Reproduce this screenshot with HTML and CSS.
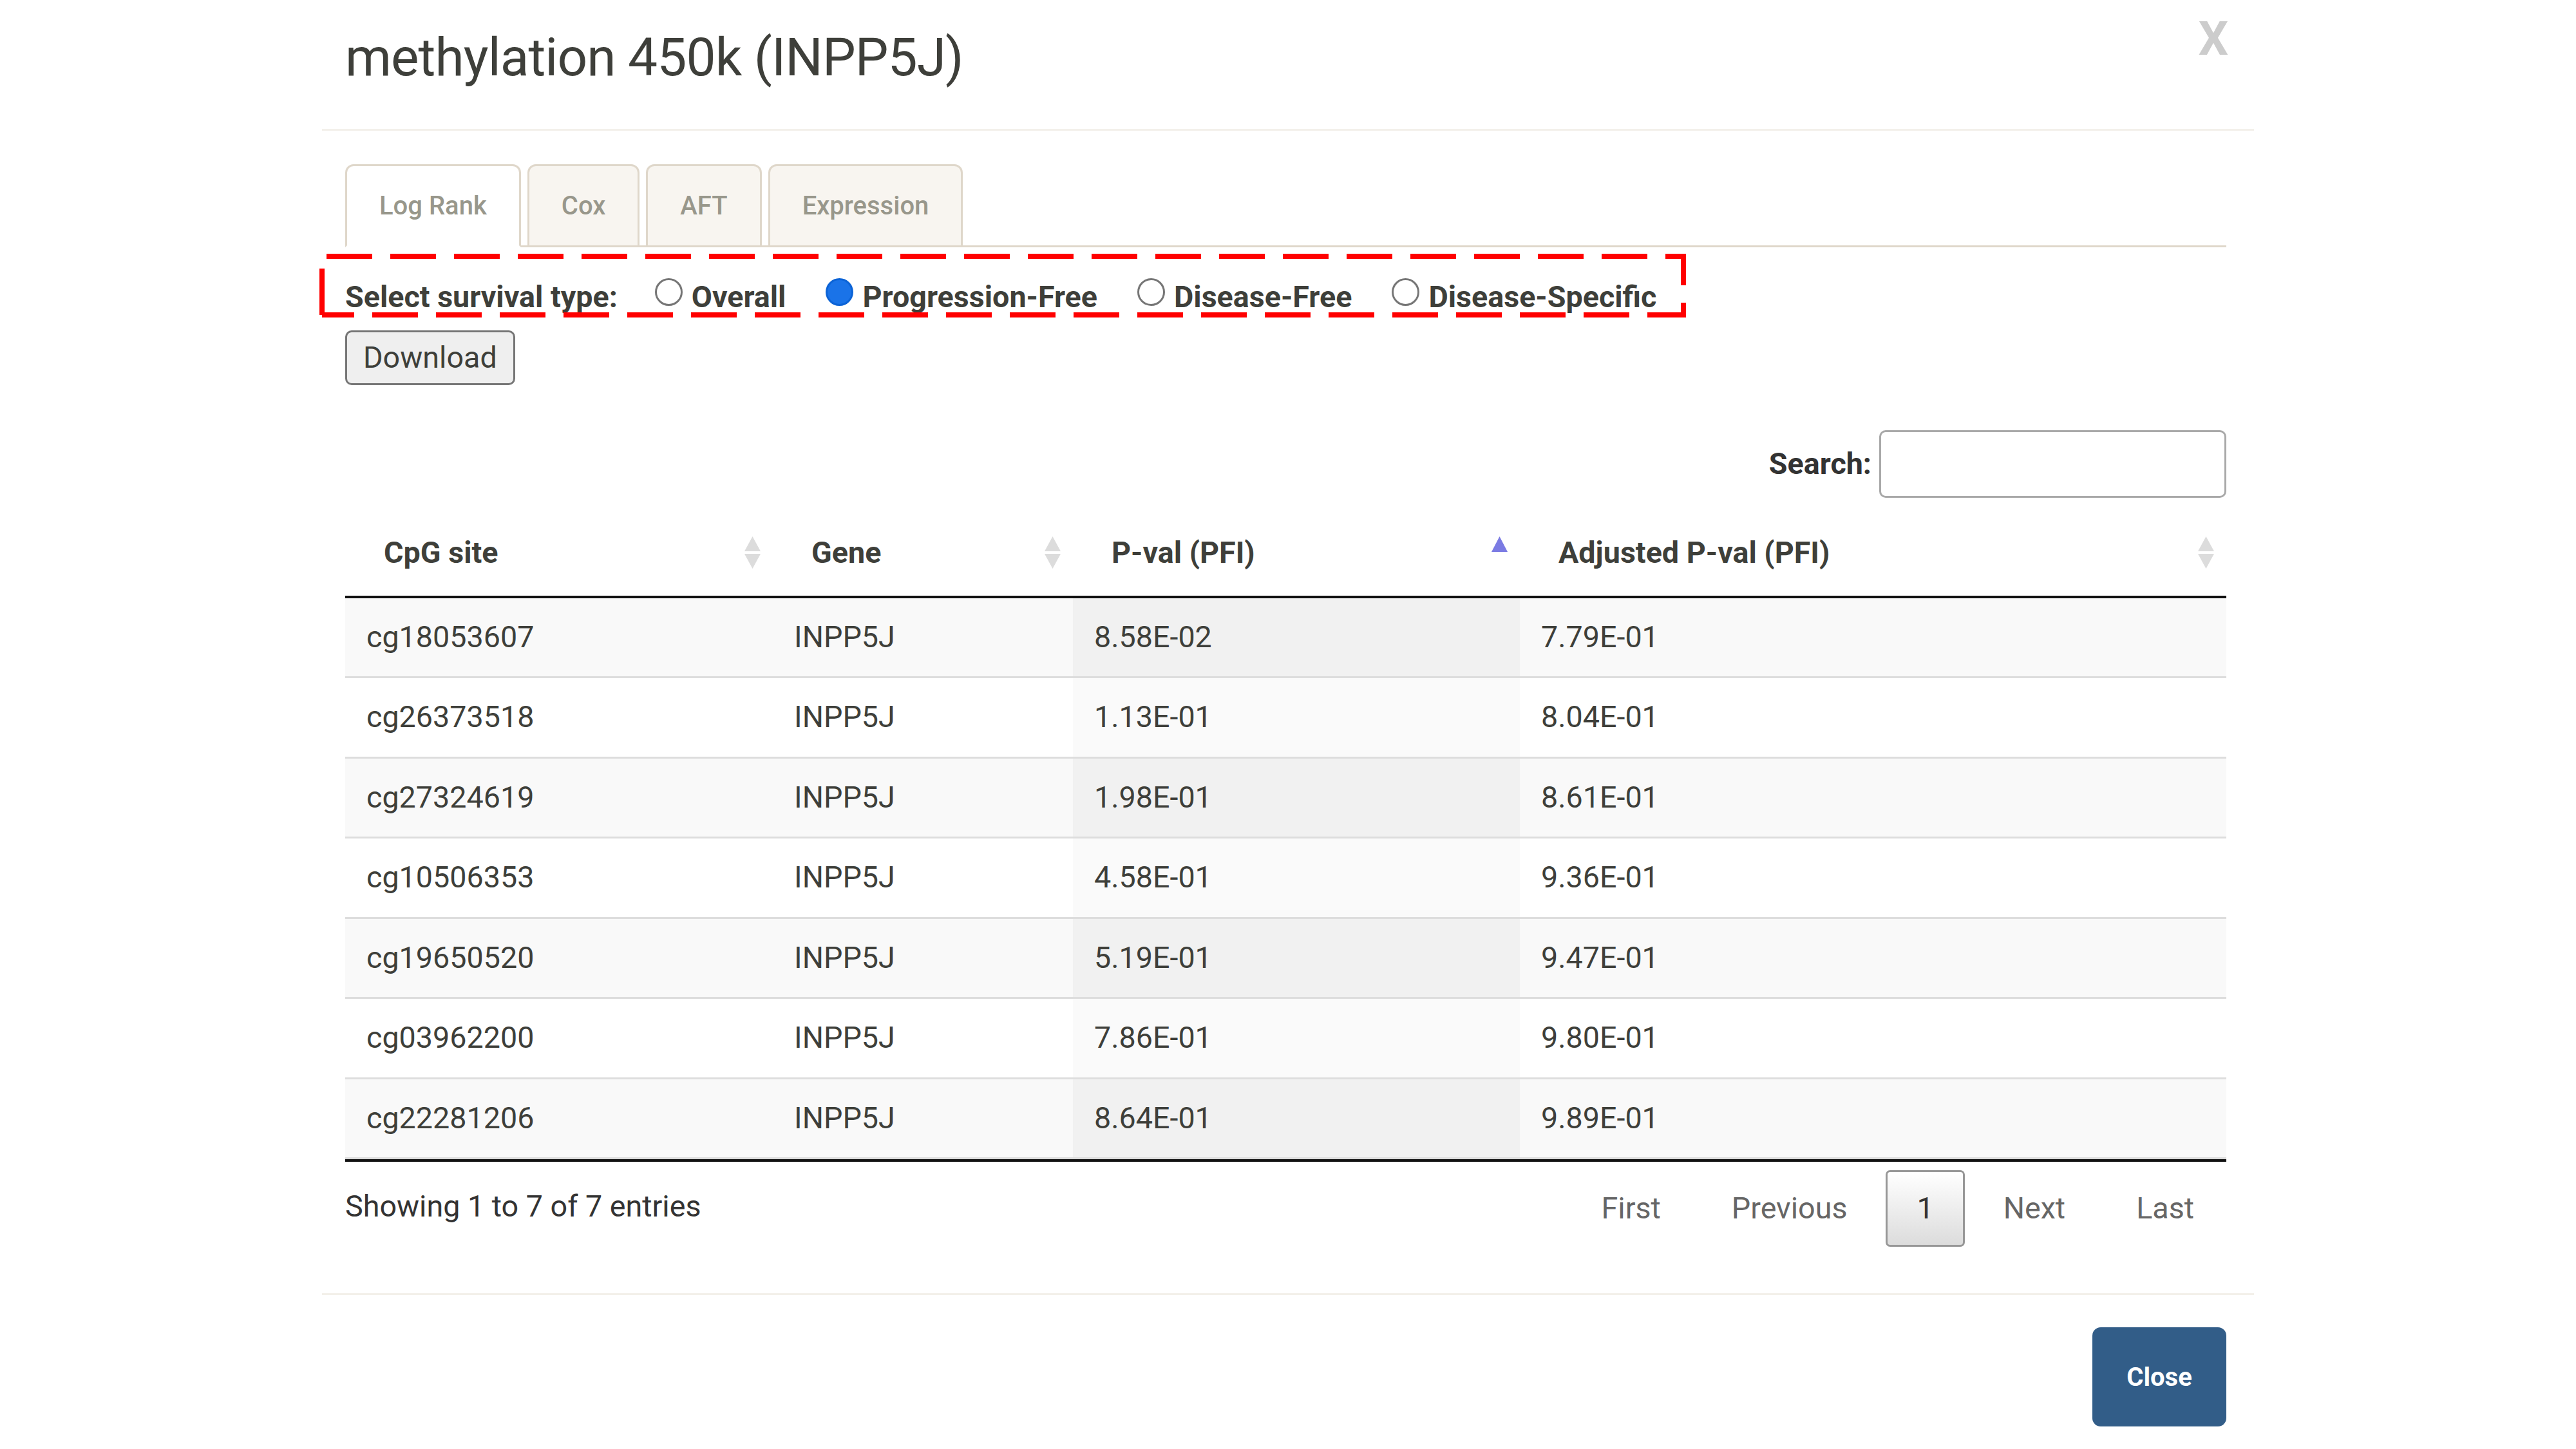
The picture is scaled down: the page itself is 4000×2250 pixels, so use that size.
FILE: index.html
```html
<!DOCTYPE html>
<html>
<head>
<meta charset="utf-8">
<link rel="stylesheet" href="styles.css">
</head>
<body>
<div class="modal">
  <div class="modal-header">
    <h4 class="modal-title">methylation 450k (INPP5J)</h4>
    <button class="close">X</button>
  </div>
  <div class="modal-body">
    <ul class="nav-tabs">
      <li class="active"><a>Log Rank</a></li>
      <li><a>Cox</a></li>
      <li><a>AFT</a></li>
      <li><a>Expression</a></li>
    </ul>
    <div class="survival">
      <svg class="annot" width="2130" height="107" viewBox="496 392 2130 107">
        <path d="M500 398 H2618" class="dash dash-top"/>
        <path d="M2614 398 V493" class="dash dash-right"/>
        <path d="M500 489 H2618" class="dash dash-bottom"/>
        <path d="M500 394 V493" class="dash dash-left"/>
      </svg>
      <span class="lbl">Select survival type:</span><label class="opt"><span class="radio"></span>Overall</label><label class="opt"><span class="radio checked"></span>Progression-Free</label><label class="opt"><span class="radio"></span>Disease-Free</label><label class="opt"><span class="radio"></span>Disease-Specific</label>
    </div>
    <button class="download">Download</button>
    <div class="dt-filter">
      <label class="search-label">Search:</label><input class="search-input" type="text">
    </div>
    <table class="dt">
      <colgroup>
        <col class="c1"><col class="c2"><col class="c3"><col class="c4">
      </colgroup>
      <thead>
        <tr>
          <th>CpG site<span class="sort"><svg width="25" height="50" viewBox="0 0 25 50"><polygon points="12.5,0 25,23 0,23" fill="#dcdcdc"/><polygon points="0,27 25,27 12.5,50" fill="#dcdcdc"/></svg></span></th>
          <th>Gene<span class="sort"><svg width="25" height="50" viewBox="0 0 25 50"><polygon points="12.5,0 25,23 0,23" fill="#dcdcdc"/><polygon points="0,27 25,27 12.5,50" fill="#dcdcdc"/></svg></span></th>
          <th>P-val (PFI)<span class="sort"><svg width="25" height="50" viewBox="0 0 25 50"><polygon points="12.5,0 25,24 0,24" fill="#7b7be3"/></svg></span></th>
          <th>Adjusted P-val (PFI)<span class="sort"><svg width="25" height="50" viewBox="0 0 25 50"><polygon points="12.5,0 25,23 0,23" fill="#dcdcdc"/><polygon points="0,27 25,27 12.5,50" fill="#dcdcdc"/></svg></span></th>
        </tr>
      </thead>
      <tbody>
        <tr class="odd"><td>cg18053607</td><td>INPP5J</td><td class="sorted">8.58E-02</td><td>7.79E-01</td></tr>
        <tr class="even"><td>cg26373518</td><td>INPP5J</td><td class="sorted">1.13E-01</td><td>8.04E-01</td></tr>
        <tr class="odd"><td>cg27324619</td><td>INPP5J</td><td class="sorted">1.98E-01</td><td>8.61E-01</td></tr>
        <tr class="even"><td>cg10506353</td><td>INPP5J</td><td class="sorted">4.58E-01</td><td>9.36E-01</td></tr>
        <tr class="odd"><td>cg19650520</td><td>INPP5J</td><td class="sorted">5.19E-01</td><td>9.47E-01</td></tr>
        <tr class="even"><td>cg03962200</td><td>INPP5J</td><td class="sorted">7.86E-01</td><td>9.80E-01</td></tr>
        <tr class="odd"><td>cg22281206</td><td>INPP5J</td><td class="sorted">8.64E-01</td><td>9.89E-01</td></tr>
      </tbody>
    </table>
    <div class="dt-bottom">
      <div class="dt-info">Showing 1 to 7 of 7 entries</div>
      <div class="dt-paginate">
        <a class="pbtn">First</a><a class="pbtn">Previous</a><a class="pbtn current">1</a><a class="pbtn">Next</a><a class="pbtn">Last</a>
      </div>
    </div>
  </div>
  <div class="modal-footer">
    <button class="btn-close">Close</button>
  </div>
</div>
</body>
</html>
```

FILE: styles.css
```css
html, body {
  margin: 0;
  padding: 0;
  background: #ffffff;
}
body {
  font-family: Roboto, "Liberation Sans", Arial, sans-serif;
  font-size: 46.67px;
  line-height: 66.67px;
  color: #3e3f3a;
}
.modal {
  width: 3000px;
  margin: 0 auto;
}
.modal-header {
  position: relative;
  height: 203px;
  box-sizing: border-box;
  border-bottom: 3px solid #f3f0ea;
  padding: 0 43px 0 36px;
}
.modal-title {
  margin: 0;
  padding-top: 43px;
  font-size: 82px;
  letter-spacing: -0.9px;
  line-height: 92px;
  font-weight: 400;
  color: #3e3f3a;
}
.close {
  position: absolute;
  right: 40px;
  top: 24px;
  margin: 0;
  padding: 0;
  border: 0;
  background: none;
  font-family: Roboto, "Liberation Sans", Arial, sans-serif;
  font-weight: 700;
  font-size: 73px;
  line-height: 73px;
  color: #cccccc;
}
.modal-body {
  padding: 52px 43px 72px 36px;
}
.nav-tabs {
  display: flex;
  list-style: none;
  margin: 0;
  padding: 0;
  border-bottom: 3px solid #dfd7ca;
}
.nav-tabs li {
  margin-right: 10px;
  margin-bottom: -3px;
}
.nav-tabs a {
  display: block;
  box-sizing: border-box;
  height: 129px;
  padding: 0 50px;
  border: 3px solid #dfd7ca;
  border-radius: 13px 13px 0 0;
  background: #f8f5f0;
  color: #98978b;
  font-size: 40px;
  font-weight: 500;
  line-height: 123px;
}
.nav-tabs li.active a {
  background: #ffffff;
  border-bottom-color: #ffffff;
}
.survival {
  position: relative;
  margin-top: 44px;
  font-weight: 700;
  white-space: nowrap;
  line-height: 66.67px;
}
.annot {
  position: absolute;
  left: -40px;
  top: -36px;
  overflow: visible;
}
.dash {
  fill: none;
  stroke: #ff0000;
  stroke-width: 8;
}
.dash-top {
  stroke-dasharray: 71 28;
  stroke-dashoffset: 92;
}
.dash-bottom {
  stroke-dasharray: 71 28;
  stroke-dashoffset: 21;
}
.dash-right {
  stroke-dasharray: 45 27 30 200;
}
.dash-left {
  stroke-dasharray: 0 23 72 200;
}
.opt {
  margin-left: 58px;
}
.opt + .opt {
  margin-left: 62px;
}
.radio {
  display: inline-block;
  width: 43px;
  height: 43px;
  box-sizing: border-box;
  border-radius: 50%;
  border: 3px solid #767676;
  background: #ffffff;
  margin-right: 14px;
  vertical-align: 2px;
}
.radio.checked {
  border-color: #0b63d6;
  background: #1a73e8;
}
.download {
  display: block;
  margin-top: 18px;
  height: 85px;
  padding: 0 25px;
  border: 3px solid #767676;
  border-radius: 10px;
  background: #efefef;
  font-family: Roboto, "Liberation Sans", Arial, sans-serif;
  font-size: 46.67px;
  color: #3e3f3a;
}
.dt-filter {
  display: flex;
  justify-content: flex-end;
  align-items: center;
  margin-top: 70px;
  height: 105px;
}
.search-label {
  font-weight: 700;
  color: #333333;
}
.search-input {
  width: 539px;
  height: 105px;
  box-sizing: border-box;
  margin: 0 0 0 12px;
  border: 3px solid #a9a9a9;
  border-radius: 10px;
  background: #ffffff;
}
.dt {
  margin-top: 19px;
  width: 2921px;
  table-layout: fixed;
  border-collapse: separate;
  border-spacing: 0;
  border-bottom: 4px solid #111111;
}
.c1 { width: 664px; }
.c2 { width: 466px; }
.c3 { width: 694px; }
.c4 { width: 1097px; }
.dt th {
  position: relative;
  text-align: left;
  font-weight: 700;
  padding: 33px 60px;
  line-height: 67px;
  border-bottom: 4px solid #111111;
  color: #3e3f3a;
}
.sort {
  position: absolute;
  right: 19px;
  top: 41px;
  width: 25px;
  height: 50px;
  line-height: 0;
}
.dt td {
  padding: 27px 33px;
  line-height: 67.5px;
  border-bottom: 3px solid #dddddd;
  color: #3e3f3a;
}
.dt tr.odd td { background: #f9f9f9; }
.dt tr.odd td.sorted { background: #f1f1f1; }
.dt tr.even td { background: #ffffff; }
.dt tr.even td.sorted { background: #fafafa; }
.dt-bottom {
  display: flex;
  justify-content: space-between;
  align-items: flex-start;
}
.dt-info {
  padding-top: 36px;
  color: #333333;
}
.dt-paginate {
  padding-top: 13px;
  display: flex;
}
.pbtn {
  display: block;
  padding: 23px 47px;
  margin-left: 10px;
  border: 3px solid transparent;
  border-radius: 7px;
  color: #666666;
  line-height: 67px;
}
.pbtn.current {
  padding: 23px 45px;
  border-color: #979797;
  background: linear-gradient(to bottom, #ffffff 0%, #dcdcdc 100%);
  color: #333333;
}
.modal-footer {
  border-top: 3px solid #f3f0ea;
  padding: 50px 43px 50px 36px;
  display: flex;
  justify-content: flex-end;
}
.btn-close {
  width: 208px;
  height: 154px;
  border: 0;
  border-radius: 13px;
  background: #325d88;
  color: #ffffff;
  font-family: Roboto, "Liberation Sans", Arial, sans-serif;
  font-size: 40px;
  font-weight: 700;
}
```
